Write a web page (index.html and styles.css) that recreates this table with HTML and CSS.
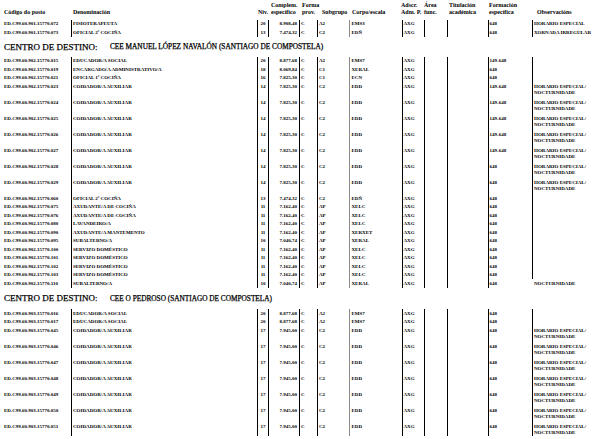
FILE: index.html
```html
<!DOCTYPE html>
<html lang="gl">
<head>
<meta charset="utf-8">
<title>Relación de postos</title>
<link rel="stylesheet" href="styles.css">
</head>
<body>
<div class="page">
  <div class="head">
    <div><span>&nbsp;</span><span>Código do posto</span></div>
    <div><span>&nbsp;</span><span>Denominación</span></div>
    <div><span>&nbsp;</span><span>Niv.</span></div>
    <div><span>Complem.</span><span>específico</span></div>
    <div><span>Forma</span><span>prov.</span></div>
    <div><span>&nbsp;</span><span>Subgrupo</span></div>
    <div><span>&nbsp;</span><span>Corpo/escala</span></div>
    <div><span>Adscr.</span><span>Adm. P.</span></div>
    <div><span>Área</span><span>func.</span></div>
    <div><span>Titulación</span><span>académica</span></div>
    <div><span>Formación</span><span>específica</span></div>
    <div><span>&nbsp;</span><span>Observacións</span></div>
  </div>

  <div class="block">
    <div class="row s"><div>ED.C99.60.901.15770.072</div><div>FISIOTERAPEUTA</div><div>20</div><div>8.908,48</div><div>C</div><div>A2</div><div>EMS3</div><div>AXG</div><div></div><div></div><div>648</div><div>HORARIO ESPECIAL</div></div>
    <div class="row s"><div>ED.C99.60.901.15770.073</div><div>OFICIAL 2ª COCIÑA</div><div>13</div><div>7.474,32</div><div>C</div><div>C2</div><div>EDÑ</div><div>AXG</div><div></div><div></div><div>648</div><div>XORNADA IRREGULAR</div></div>
  </div>

  <div class="sec sec1"><span class="lbl">CENTRO DE DESTINO:</span><span class="name">CEE MANUEL LÓPEZ NAVALÓN (SANTIAGO DE COMPOSTELA)</span></div>

  <div class="block">
    <div class="row s"><div>ED.C99.60.902.15770.015</div><div>EDUCADOR/A SOCIAL</div><div>20</div><div>8.877,68</div><div>C</div><div>A2</div><div>EMS7</div><div>AXG</div><div></div><div></div><div>149-648</div><div></div></div>
    <div class="row s"><div>ED.C99.60.902.15770.019</div><div>ENCARGADO/A ADMINISTRATIVO/A</div><div>18</div><div>8.069,84</div><div>C</div><div>C1</div><div>XERAL</div><div>AXG</div><div></div><div></div><div>648</div><div></div></div>
    <div class="row s"><div>ED.C99.60.902.15770.021</div><div>OFICIAL 1ª COCIÑA</div><div>16</div><div>7.825,30</div><div>C</div><div>C1</div><div>ECN</div><div>AXG</div><div></div><div></div><div>648</div><div></div></div>
    <div class="row d"><div>ED.C99.60.902.15770.023</div><div>COIDADOR/A AUXILIAR</div><div>14</div><div>7.825,30</div><div>C</div><div>C2</div><div>EDD</div><div>AXG</div><div></div><div></div><div>149-648</div><div>HORARIO ESPECIAL/<br>NOCTURNIDADE</div></div>
    <div class="row d"><div>ED.C99.60.902.15770.024</div><div>COIDADOR/A AUXILIAR</div><div>14</div><div>7.825,30</div><div>C</div><div>C2</div><div>EDD</div><div>AXG</div><div></div><div></div><div>149-648</div><div>HORARIO ESPECIAL/<br>NOCTURNIDADE</div></div>
    <div class="row d"><div>ED.C99.60.902.15770.025</div><div>COIDADOR/A AUXILIAR</div><div>14</div><div>7.825,30</div><div>C</div><div>C2</div><div>EDD</div><div>AXG</div><div></div><div></div><div>149-648</div><div>HORARIO ESPECIAL/<br>NOCTURNIDADE</div></div>
    <div class="row d"><div>ED.C99.60.902.15770.026</div><div>COIDADOR/A AUXILIAR</div><div>14</div><div>7.825,30</div><div>C</div><div>C2</div><div>EDD</div><div>AXG</div><div></div><div></div><div>149-648</div><div>HORARIO ESPECIAL/<br>NOCTURNIDADE</div></div>
    <div class="row d"><div>ED.C99.60.902.15770.027</div><div>COIDADOR/A AUXILIAR</div><div>14</div><div>7.825,30</div><div>C</div><div>C2</div><div>EDD</div><div>AXG</div><div></div><div></div><div>149-648</div><div>HORARIO ESPECIAL/<br>NOCTURNIDADE</div></div>
    <div class="row d"><div>ED.C99.60.902.15770.028</div><div>COIDADOR/A AUXILIAR</div><div>14</div><div>7.825,30</div><div>C</div><div>C2</div><div>EDD</div><div>AXG</div><div></div><div></div><div>648</div><div>HORARIO ESPECIAL/<br>NOCTURNIDADE</div></div>
    <div class="row d"><div>ED.C99.60.902.15770.029</div><div>COIDADOR/A AUXILIAR</div><div>14</div><div>7.825,30</div><div>C</div><div>C2</div><div>EDD</div><div>AXG</div><div></div><div></div><div>648</div><div>HORARIO ESPECIAL/<br>NOCTURNIDADE</div></div>
    <div class="row s"><div>ED.C99.60.902.15770.060</div><div>OFICIAL 2ª COCIÑA</div><div>13</div><div>7.474,32</div><div>C</div><div>C2</div><div>EDÑ</div><div>AXG</div><div></div><div></div><div>648</div><div></div></div>
    <div class="row s"><div>ED.C99.60.902.15770.075</div><div>AXUDANTE/A DE COCIÑA</div><div>11</div><div>7.162,40</div><div>C</div><div>AP</div><div>XELC</div><div>AXG</div><div></div><div></div><div>648</div><div></div></div>
    <div class="row s"><div>ED.C99.60.902.15770.076</div><div>AXUDANTE/A DE COCIÑA</div><div>11</div><div>7.162,40</div><div>C</div><div>AP</div><div>XELC</div><div>AXG</div><div></div><div></div><div>648</div><div></div></div>
    <div class="row s"><div>ED.C99.60.902.15770.080</div><div>LAVANDEIRO/A</div><div>11</div><div>7.162,40</div><div>C</div><div>AP</div><div>XELC</div><div>AXG</div><div></div><div></div><div>648</div><div></div></div>
    <div class="row s"><div>ED.C99.60.902.15770.090</div><div>AXUDANTE/A MANTEMENTO</div><div>11</div><div>7.162,40</div><div>C</div><div>AP</div><div>XERXET</div><div>AXG</div><div></div><div></div><div>648</div><div></div></div>
    <div class="row s"><div>ED.C99.60.902.15770.095</div><div>SUBALTERNO/A</div><div>10</div><div>7.040,74</div><div>C</div><div>AP</div><div>XERAL</div><div>AXG</div><div></div><div></div><div>648</div><div></div></div>
    <div class="row s"><div>ED.C99.60.902.15770.100</div><div>SERVIZO DOMÉSTICO</div><div>11</div><div>7.162,40</div><div>C</div><div>AP</div><div>XELC</div><div>AXG</div><div></div><div></div><div>648</div><div></div></div>
    <div class="row s"><div>ED.C99.60.902.15770.101</div><div>SERVIZO DOMÉSTICO</div><div>11</div><div>7.162,40</div><div>C</div><div>AP</div><div>XELC</div><div>AXG</div><div></div><div></div><div>648</div><div></div></div>
    <div class="row s"><div>ED.C99.60.902.15770.102</div><div>SERVIZO DOMÉSTICO</div><div>11</div><div>7.162,40</div><div>C</div><div>AP</div><div>XELC</div><div>AXG</div><div></div><div></div><div>648</div><div></div></div>
    <div class="row s"><div>ED.C99.60.902.15770.103</div><div>SERVIZO DOMÉSTICO</div><div>11</div><div>7.162,40</div><div>C</div><div>AP</div><div>XELC</div><div>AXG</div><div></div><div></div><div>648</div><div></div></div>
    <div class="row s noobs"><div>ED.C99.60.902.15770.110</div><div>SUBALTERNO/A</div><div>10</div><div>7.040,74</div><div>C</div><div>AP</div><div>XERAL</div><div>AXG</div><div></div><div></div><div>648</div><div>NOCTURNIDADE</div></div>
  </div>

  <div class="sec sec2"><span class="lbl">CENTRO DE DESTINO:</span><span class="name">CEE O PEDROSO (SANTIAGO DE COMPOSTELA)</span></div>

  <div class="block">
    <div class="row s"><div>ED.C99.60.903.15770.016</div><div>EDUCADOR/A SOCIAL</div><div>20</div><div>8.877,68</div><div>C</div><div>A2</div><div>EMS7</div><div>AXG</div><div></div><div></div><div>648</div><div></div></div>
    <div class="row s"><div>ED.C99.60.903.15770.017</div><div>EDUCADOR/A SOCIAL</div><div>20</div><div>8.877,68</div><div>C</div><div>A2</div><div>EMS7</div><div>AXG</div><div></div><div></div><div>648</div><div></div></div>
    <div class="row d"><div>ED.C99.60.903.15770.045</div><div>COIDADOR/A AUXILIAR</div><div>17</div><div>7.945,00</div><div>C</div><div>C2</div><div>EDD</div><div>AXG</div><div></div><div></div><div>648</div><div>HORARIO ESPECIAL/<br>NOCTURNIDADE</div></div>
    <div class="row d"><div>ED.C99.60.903.15770.046</div><div>COIDADOR/A AUXILIAR</div><div>17</div><div>7.945,00</div><div>C</div><div>C2</div><div>EDD</div><div>AXG</div><div></div><div></div><div>648</div><div>HORARIO ESPECIAL/<br>NOCTURNIDADE</div></div>
    <div class="row d"><div>ED.C99.60.903.15770.047</div><div>COIDADOR/A AUXILIAR</div><div>17</div><div>7.945,00</div><div>C</div><div>C2</div><div>EDD</div><div>AXG</div><div></div><div></div><div>648</div><div>HORARIO ESPECIAL/<br>NOCTURNIDADE</div></div>
    <div class="row d"><div>ED.C99.60.903.15770.048</div><div>COIDADOR/A AUXILIAR</div><div>17</div><div>7.945,00</div><div>C</div><div>C2</div><div>EDD</div><div>AXG</div><div></div><div></div><div>648</div><div>HORARIO ESPECIAL/<br>NOCTURNIDADE</div></div>
    <div class="row d"><div>ED.C99.60.903.15770.049</div><div>COIDADOR/A AUXILIAR</div><div>17</div><div>7.945,00</div><div>C</div><div>C2</div><div>EDD</div><div>AXG</div><div></div><div></div><div>648</div><div>HORARIO ESPECIAL/<br>NOCTURNIDADE</div></div>
    <div class="row d"><div>ED.C99.60.903.15770.050</div><div>COIDADOR/A AUXILIAR</div><div>17</div><div>7.945,00</div><div>C</div><div>C2</div><div>EDD</div><div>AXG</div><div></div><div></div><div>648</div><div>HORARIO ESPECIAL/<br>NOCTURNIDADE</div></div>
    <div class="row d last"><div>ED.C99.60.903.15770.051</div><div>COIDADOR/A AUXILIAR</div><div>17</div><div>7.945,00</div><div>C</div><div>C2</div><div>EDD</div><div>AXG</div><div></div><div></div><div>648</div><div>HORARIO ESPECIAL/<br>NOCTURNIDADE</div></div>
  </div>
</div>
</body>
</html>
```

FILE: styles.css
```css
html, body {
  margin: 0;
  padding: 0;
  background: #fff;
}

body {
  width: 616px;
  height: 439px;
  overflow: hidden;
  color: #000;
  font-family: "Liberation Serif", "Times New Roman", serif;
}

.page {
  display: flex;
  flex-direction: column;
}

/* column header */
.head {
  display: grid;
  grid-template-columns: 69px 185px 13px 31px 20px 30px 49px 23px 25px 40px 48px 1fr;
  padding-left: 4px;
  height: 19.5px;
  font-size: 6px;
  font-weight: bold;
  line-height: 7px;
  white-space: nowrap;
}

.head > div {
  padding-top: 1.5px;
}

.head span {
  display: block;
}

/* data rows */
.block {
  display: flex;
  flex-direction: column;
}

.row {
  display: grid;
  grid-template-columns: 71px 186px 11px 31px 18px 32px 53px 22px 23px 41px 44px 1fr;
  font-size: 5px;
  font-weight: bold;
  line-height: 6px;
  white-space: nowrap;
}

.row > div {
  box-sizing: border-box;
  padding-top: 1.5px;
  padding-left: 1px;
}

.row > div + div {
  border-left: 1px solid #000;
}

.row > :nth-child(1) {
  padding-left: 4px;
}

.row > :nth-child(3) {
  text-align: center;
  padding-left: 0;
}

.row > :nth-child(4) {
  text-align: right;
  padding-right: 2px;
}

.row > :nth-child(7) {
  border-left-color: #8a8a8a;
  padding-left: 1.5px;
}

.row > :nth-child(8),
.row > :nth-child(11) {
  padding-left: 0.5px;
}

.s {
  height: 8.5px;
}

.d {
  height: 16px;
}

.last {
  height: 14px;
}

.noobs > :last-child {
  border-left-color: transparent;
}

/* section titles */
.sec {
  display: flex;
  align-items: center;
  padding-left: 4px;
  white-space: nowrap;
  font-weight: normal;
  -webkit-text-stroke: 0.25px #000;
}

.sec1 {
  height: 20px;
}

.sec2 {
  height: 21.5px;
}

.sec .lbl {
  width: 106px;
  font-size: 9px;
}

.sec .name {
  font-size: 7.3px;
}
```
